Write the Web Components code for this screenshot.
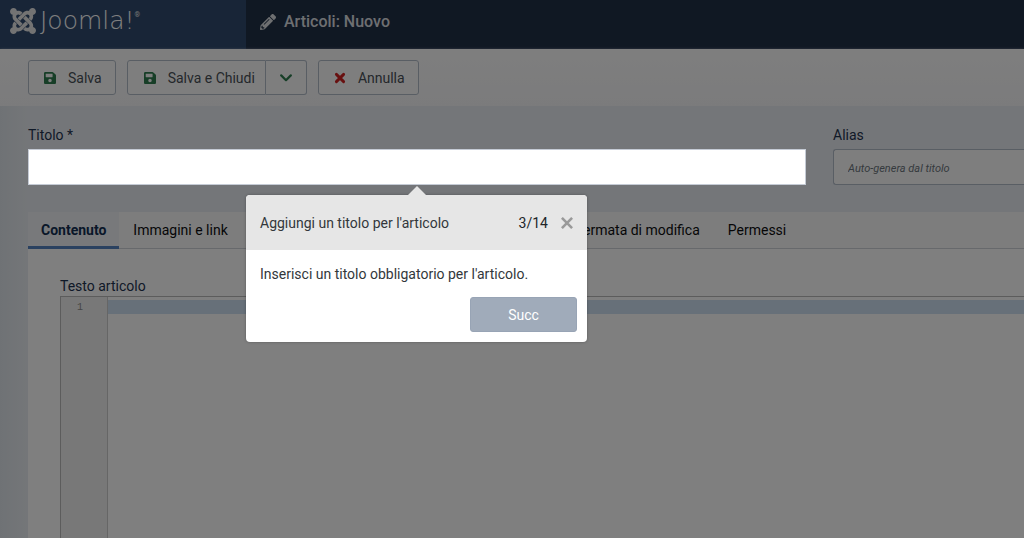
<!DOCTYPE html>
<html lang="it">
<head>
<meta charset="utf-8">
<title>Articoli: Nuovo</title>
<style>
  html, body { height: 100%; }
  body { margin: 0; overflow: hidden; background: #e9eef3; font: 14px/20px Roboto, sans-serif; color: #22262a; }
</style>
</head>
<body>
<article-page></article-page>
<script>
const define = (name, html, setup) => customElements.define(name, class extends HTMLElement {
  connectedCallback() {
    if (this.shadowRoot) return;
    const t = document.createElement('template');
    t.innerHTML = html;
    this.attachShadow({ mode: 'open' }).append(t.content.cloneNode(true));
    if (setup) setup(this, this.shadowRoot);
  }
});

const icons = {
  joomla: ['0 32 448 448', '<path d="M.6 92.1C.6 58.8 27.4 32 60.4 32c30 0 54.5 21.9 59.2 50.2 32.6-7.6 67.1.6 96.5 30l-44.3 44.3c-20.5-20.5-42.6-16.3-55.4-3.5-14.3 14.3-14.3 37.9 0 52.2l99.5 99.5-44 44.3c-87.7-87.2-49.7-49.7-99.8-99.7-26.8-26.5-35-64.8-24.8-98.9C20.4 144.6.6 120.7.6 92.1zm129.5 116.4l44.3 44.3c10-10 89.7-89.7 99.7-99.8 14.3-14.3 37.6-14.3 51.9 0 12.8 12.8 17 35-3.5 55.4l44 44.3c31.2-31.2 38.5-67.6 28.9-101.2 29.2-4.1 51.9-29.2 51.9-59.5 0-33.2-26.8-60.1-59.8-60.1-30.3 0-55.4 22.5-59.5 51.6-33.8-9.9-71.7-1.5-98.3 25.1-18.3 19.1-71.1 71.5-99.6 99.9zm266.3 152.2c8.2-32.7-.9-68.5-26.3-93.9-11.8-12.2 5 4.7-99.5-99.7l-44.3 44.3 99.7 99.7c14.3 14.3 14.3 37.6 0 51.9-12.8 12.8-35 17-55.4-3.5l-44 44.3c27.6 30.2 68 38.8 102.7 28 5.5 27.4 29.7 48.1 58.9 48.1 33 0 59.8-26.8 59.8-60.1 0-30.2-22.5-55-51.6-59.1zm-84.3-53.1l-44-44.3c-87 86.4-50.4 50.4-99.7 99.8-14.3 14.3-37.6 14.3-51.9 0-13.1-13.4-16.9-35.3 3.2-55.4l-44-44.3c-30.2 30.2-38 65.2-29.5 98.3-26.7 6-46.2 29.9-46.2 58.2C0 453.2 26.8 480 59.8 480c28.6 0 52.5-19.8 58.6-46.7 32.7 8.2 68.5-.6 94.2-26 32.1-32 12.2-12.4 99.5-99.7z"/>'],
  pencil: ['0 0 512 512', '<path d="M497.9 142.1l-46.1 46.1c-4.7 4.7-12.3 4.7-17 0l-111-111c-4.7-4.7-4.7-12.3 0-17l46.1-46.1c18.7-18.7 49.1-18.7 67.9 0l60.1 60.1c18.8 18.7 18.8 49.1 0 67.9zM284.2 99.8L21.6 362.4.4 483.9c-2.9 16.4 11.4 30.6 27.8 27.8l121.5-21.3 262.6-262.6c4.7-4.7 4.7-12.3 0-17l-111-111c-4.8-4.7-12.4-4.7-17.1 0zM124.1 339.9c-5.5-5.5-5.5-14.3 0-19.8l154-154c5.5-5.5 14.3-5.5 19.8 0s5.5 14.3 0 19.8l-154 154c-5.5 5.5-14.3 5.5-19.8 0zM88 424h48v36.3l-64.5 11.3-31.1-31.1L51.7 376H88v48z"/>'],
  save: ['0 32 448 448', '<path d="M433.941 129.941l-83.882-83.882A48 48 0 0 0 316.118 32H48C21.49 32 0 53.49 0 80v352c0 26.51 21.49 48 48 48h352c26.51 0 48-21.49 48-48V163.882a48 48 0 0 0-14.059-33.941zM224 416c-35.346 0-64-28.654-64-64 0-35.346 28.654-64 64-64s64 28.654 64 64c0 35.346-28.654 64-64 64zm96-304.52V212c0 6.627-5.373 12-12 12H76c-6.627 0-12-5.373-12-12V108c0-6.627 5.373-12 12-12h228.52c3.183 0 6.235 1.264 8.485 3.515l3.48 3.48A11.996 11.996 0 0 1 320 111.48z"/>'],
  chevron: ['0 0 12 12', '<path d="M1.2 3.4 6 8.2l4.800-4.800" fill="none" stroke="currentColor" stroke-width="2.200" stroke-linecap="round" stroke-linejoin="round"/>'],
  cross: ['0 0 12 12', '<path d="M2.400 2.400l7.200 7.200M9.600 2.400 2.400 9.600" fill="none" stroke="currentColor" stroke-width="2.900" stroke-linecap="round"/>'],
  close: ['0 0 12 12', '<path d="M.9.9l10.200 10.200M11.100.9.9 11.100" fill="none" stroke="currentColor" stroke-width="2.600"/>']
};
define('ui-icon', `<style>:host{display:block;flex:none;width:12px;height:12px} svg{display:block;width:100%;height:100%;fill:currentColor}</style><svg aria-hidden="true"></svg>`, (el, root) => {
  const [box, shape] = icons[el.getAttribute('name')];
  const svg = root.querySelector('svg');
  svg.setAttribute('viewBox', box);
  svg.innerHTML = shape;
});

define('page-header', `<style>
  :host{display:flex;height:49px;background:#213047;color:#fff}
  a{display:flex;align-items:center;width:246px;box-sizing:border-box;padding:0 10px 7px;background:#304a6e;color:#e6e6e6;text-decoration:none}
  a ui-icon{width:26px;height:26px}
  .word{padding-left:4px;color:#fff;font:200 25px/26px "DejaVu Sans Light","DejaVu Sans",sans-serif}
  sup{align-self:flex-start;padding-top:9px;font:7px/12px Roboto,sans-serif}
  h1{display:flex;align-items:center;gap:8px;margin:0;padding:0 14px 6px;font:500 16px/24px Roboto,sans-serif;color:#dcdfe2}
  h1 ui-icon{width:16px;height:16px}
</style>
<a href="#" aria-label="Joomla!"><ui-icon name="joomla"></ui-icon><span class="word">Joomla!</span><sup>®</sup></a>
<h1><ui-icon name="pencil"></ui-icon><slot></slot></h1>`);

define('tool-button', `<style>
  :host{display:block}
  button{display:flex;align-items:center;gap:12px;height:35px;box-sizing:border-box;padding:0 13px 0 15px;border:1px solid #b3bcc9;border-radius:3px;background:#fdfdfd;color:#495057;font:14px/20px Roboto,sans-serif}
  ui-icon{color:#2f7d4f}
  :host([name=cross]) ui-icon{color:#d02020}
  :host([join=start]) button{border-radius:3px 0 0 3px;padding:0 10px 0 16px}
  :host([join=end]) button{border-left:0;border-radius:0 3px 3px 0;padding:0 14px}
  :host([join=end]) slot{display:none}
</style><button type="button"><slot></slot></button>`, (el, root) => {
  const icon = document.createElement('ui-icon');
  const button = root.querySelector('button');
  icon.setAttribute('name', el.getAttribute('name'));
  button.prepend(icon);
  if (el.title) button.setAttribute('aria-label', el.title);
});

define('tool-bar', `<style>
  :host{display:flex;gap:11px;padding:11px 28px;background:linear-gradient(#fdfdfd,#f7f7f9);box-shadow:0 1px 3px #c4cad8}
  div{display:flex}
</style>
<tool-button name="save">Salva</tool-button>
<div><tool-button name="save" join="start">Salva e Chiudi</tool-button><tool-button name="chevron" join="end" title="Altre opzioni"></tool-button></div>
<tool-button name="cross">Annulla</tool-button>`);

define('text-field', `<style>
  :host{display:block;position:relative}
  label{display:block;margin-bottom:4px;color:#1f3350}
  input{display:block;width:100%;height:36px;box-sizing:border-box;padding:0 14px;border:1px solid #b3bcc9;border-radius:3px;background:#fdfdfd;font:14px/20px Roboto,sans-serif;outline:0}
  input::placeholder{color:#6c757d;font:italic 11px/20px Roboto,sans-serif;opacity:1}
  :host([open-end]) input{border-right:0;border-radius:3px 0 0 3px}
  :host([spotlight]) input{position:relative;z-index:2;background:#fff;border-radius:0;border-color:#c5cbd5;box-shadow:0 0 0 200vmax rgba(0,0,0,.5)}
</style><label for="field"></label><input id="field" type="text"><slot></slot>`, (el, root) => {
  root.querySelector('label').textContent = el.getAttribute('label');
  root.querySelector('input').placeholder = el.getAttribute('placeholder') || '';
});

define('tour-step', `<style>
  :host{display:block;position:absolute;z-index:3;top:70px;left:50%;width:341px;margin-left:-171px;border-radius:4px;background:#fff;color:#33373b;box-shadow:0 0 3px rgba(0,0,0,.3)}
  :host::before{content:"";position:absolute;top:-9px;left:50%;margin-left:-9px;border:9px solid transparent;border-top:0;border-bottom-color:#e6e6e6}
  header{display:flex;align-items:center;height:55px;padding:0 14px;border-radius:4px 4px 0 0;background:#e6e6e6}
  h2{flex:1;margin:0;font:14px/20px Roboto,sans-serif}
  .count{color:#212529}
  .close{margin-left:13px;padding:0;border:0;background:none;color:#999}
  p{margin:0;padding:14px 14px 13px}
  footer{display:flex;justify-content:flex-end;padding:0 10px 10px}
  .next{width:107px;height:35px;border:1px solid #98a4b5;border-radius:3px;background:#a0abba;color:#fff;font:14px/20px Roboto,sans-serif}
</style>
<header><h2>Aggiungi un titolo per l'articolo</h2><span class="count">3/14</span><button class="close" type="button" aria-label="Chiudi"><ui-icon name="close"></ui-icon></button></header>
<p><slot></slot></p>
<footer><button class="next" type="button">Succ</button></footer>`);

define('tab-list', `<style>
  :host{display:flex;height:36px;border-bottom:1px solid #cfd3d9;background:#fbfbfb;white-space:nowrap}
  button{box-sizing:border-box;height:37px;padding:2px 14px 0;border:0;border-bottom:3px solid transparent;background:none;color:#0c0d0f;font:14px/20px Roboto,sans-serif}
  button[aria-selected=true]{border-color:#5583c0;padding:2px 13px 0;background:#f1f3f6;color:#132f53;font-weight:700}
</style>`, (el, root) => {
  el.setAttribute('role', 'tablist');
  el.getAttribute('tabs').split('|').forEach((name, i) => {
    const b = document.createElement('button');
    b.type = 'button';
    b.setAttribute('role', 'tab');
    b.setAttribute('aria-selected', String(i === 0));
    b.textContent = name;
    root.append(b);
  });
});

define('code-editor', `<style>
  :host{display:flex;flex-direction:column;flex:1}
  label{color:#1f3350}
  .box{display:flex;flex:1;border:1px solid #b8b8b8;border-width:1px 0 0 1px;background:#fff}
  .gutter{width:47px;box-sizing:border-box;padding:4px 24px 0 0;border-right:1px solid #ccc;background:#f0f0f0;color:#8c8c8c;text-align:right;font:10px/14px "Liberation Mono",monospace}
  textarea{flex:1;min-width:0;padding:4px;border:0;outline:0;resize:none;font:10px/14px "Liberation Mono",monospace;background:linear-gradient(#cfe1f2,#cfe1f2) 0 3px/100% 14px no-repeat #fff}
</style>
<label for="code">Testo articolo</label>
<div class="box"><div class="gutter">1</div><textarea id="code" spellcheck="false"></textarea></div>`);

define('article-page', `<style>
  :host{display:flex;flex-direction:column;height:100%}
  main{display:flex;flex-direction:column;flex:1;padding:19px 0 0 28px;background:linear-gradient(to right,#dfe5eb,#e9edf2 28px)}
  .fields{display:grid;grid-template-columns:778fr 191fr;gap:27px;margin-bottom:27px}
  .panel{display:flex;flex-direction:column;flex:1;background:#fefefe}
  code-editor{margin:27px 0 0 32px}
</style>
<page-header>Articoli: Nuovo</page-header>
<tool-bar></tool-bar>
<main>
  <div class="fields">
    <text-field label="Titolo *" spotlight><tour-step>Inserisci un titolo obbligatorio per l'articolo.</tour-step></text-field>
    <text-field label="Alias" placeholder="Auto-genera dal titolo" open-end></text-field>
  </div>
  <div class="panel">
    <tab-list tabs="Contenuto|Immagini e link|Opzioni articolo|Pubblicazione|Configura schermata di modifica|Permessi"></tab-list>
    <code-editor></code-editor>
  </div>
</main>`);
</script>
</body>
</html>
